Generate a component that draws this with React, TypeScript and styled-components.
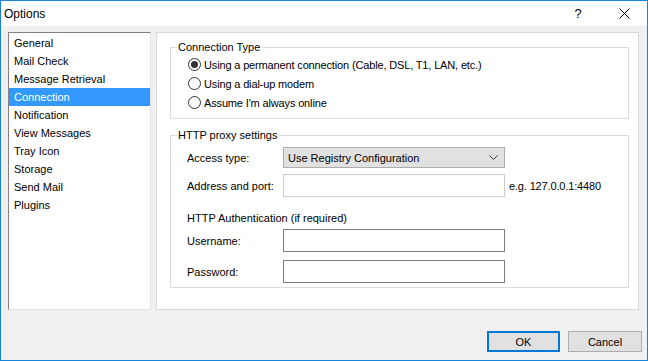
import React, { useState } from 'react';
import styled, { createGlobalStyle } from 'styled-components';

const GlobalStyle = createGlobalStyle`
  html, body {
    margin: 0;
    padding: 0;
    background: #ffffff;
  }
  * {
    box-sizing: border-box;
  }
`;

const Window = styled.div`
  width: 648px;
  height: 361px;
  border: 1px solid #1883d7;
  background: #f0f0f0;
  display: flex;
  flex-direction: column;
  font-family: "Liberation Sans", Arial, sans-serif;
  font-size: 11px;
  color: #000;
`;

const TitleBar = styled.div`
  height: 25px;
  background: #ffffff;
  display: flex;
  align-items: center;
  padding-left: 3px;
`;

const Title = styled.div`
  flex: 1;
  font-size: 12px;
`;

const CaptionButton = styled.div`
  width: 46px;
  height: 25px;
  display: flex;
  align-items: center;
  justify-content: center;
  font-size: 13px;
`;

const Body = styled.div`
  flex: 1;
  display: flex;
  flex-direction: column;
  padding: 6px 8px 0 7px;
`;

const MainRow = styled.div`
  display: flex;
  gap: 5px;
  height: 278px;
`;

const ListBox = styled.div`
  width: 143px;
  background: #ffffff;
  border-style: solid;
  border-width: 1px;
  border-color: #828282 #e3e3e3 #e3e3e3 #828282;
  padding-top: 1px;
  display: flex;
  flex-direction: column;
`;

const ListItem = styled.div<{ $selected?: boolean }>`
  height: 18px;
  line-height: 18px;
  padding-left: 5px;
  background: ${p => (p.$selected ? '#3399ff' : 'transparent')};
  color: ${p => (p.$selected ? '#ffffff' : '#000000')};
  cursor: default;
`;

const Panel = styled.div`
  flex: 1;
  background: #ffffff;
  border: 1px solid #d9d9d9;
  padding: 7px 9px 0 13px;
  display: flex;
  flex-direction: column;
  gap: 1px;
`;

const Group = styled.fieldset<{ $pb: number; $mt?: number }>`
  margin: ${p => p.$mt ?? 0}px 0 0 0;
  border: 1px solid #dcdcdc;
  padding: 0 0 ${p => p.$pb}px 0;
  min-width: 0;
`;

const Legend = styled.legend`
  padding: 0 2px 0 1px;
  margin-left: 6px;
  line-height: 14px;
  font-size: 11px;
`;

const RadioList = styled.div`
  display: flex;
  flex-direction: column;
  padding: 1px 0 0 17px;
`;

const RadioRow = styled.label`
  height: 19px;
  display: flex;
  align-items: center;
  gap: 3px;
  letter-spacing: -0.15px;
  cursor: default;
`;

const RadioCircle = styled.span<{ $checked?: boolean }>`
  width: 13px;
  height: 13px;
  border-radius: 50%;
  border: 1px solid #333333;
  background: #ffffff;
  display: flex;
  align-items: center;
  justify-content: center;
  &::after {
    content: '';
    width: 7px;
    height: 7px;
    border-radius: 50%;
    background: ${p => (p.$checked ? '#333333' : 'transparent')};
  }
`;

const ProxyGrid = styled.div`
  display: grid;
  grid-template-columns: 96px 222px auto;
  align-items: center;
  padding-left: 16px;
`;

const FieldLabel = styled.div<{ $top: number }>`
  margin-top: ${p => p.$top}px;
`;

const Heading = styled.div<{ $top: number }>`
  grid-column: 1 / 4;
  margin-top: ${p => p.$top}px;
  height: 16px;
  line-height: 16px;
`;

const SelectBox = styled.div<{ $top: number }>`
  margin-top: ${p => p.$top}px;
  height: 21px;
  background: #e1e1e1;
  border: 1px solid #adadad;
  display: flex;
  align-items: center;
  justify-content: space-between;
  padding: 0 6px 0 4px;
`;

const TextBox = styled.div<{ $top: number; $disabled?: boolean }>`
  margin-top: ${p => p.$top}px;
  height: 23px;
  background: #ffffff;
  border: 1px solid ${p => (p.$disabled ? '#cccccc' : '#7a7a7a')};
`;

const Hint = styled.div<{ $top: number }>`
  margin-top: ${p => p.$top}px;
  padding-left: 4px;
  white-space: nowrap;
  letter-spacing: -0.15px;
`;

const ButtonRow = styled.div`
  display: flex;
  justify-content: flex-end;
  gap: 8px;
  margin-top: 21px;
  margin-right: -3px;
`;

const DialogButton = styled.button<{ $default?: boolean; $w: number }>`
  width: ${p => p.$w}px;
  height: 21px;
  font-family: "Liberation Sans", Arial, sans-serif;
  font-size: 11px;
  color: #000;
  background: #e1e1e1;
  border: ${p => (p.$default ? '2px solid #0078d7' : '1px solid #adadad')};
  padding: 0;
`;

const pages = [
  'General',
  'Mail Check',
  'Message Retrieval',
  'Connection',
  'Notification',
  'View Messages',
  'Tray Icon',
  'Storage',
  'Send Mail',
  'Plugins',
];

const connectionTypes = [
  'Using a permanent connection (Cable, DSL, T1, LAN, etc.)',
  'Using a dial-up modem',
  "Assume I'm always online",
];

export default function App() {
  const [page, setPage] = useState('Connection');
  const [connType, setConnType] = useState(0);

  return (
    <>
      <GlobalStyle />
      <Window>
        <TitleBar>
          <Title>Options</Title>
          <CaptionButton>?</CaptionButton>
          <CaptionButton>
            <svg width="11" height="11" viewBox="0 0 11 11">
              <path d="M0.5 0.5 L10.5 10.5 M10.5 0.5 L0.5 10.5" stroke="#000" strokeWidth="1" />
            </svg>
          </CaptionButton>
        </TitleBar>
        <Body>
          <MainRow>
            <ListBox>
              {pages.map(p => (
                <ListItem key={p} $selected={p === page} onClick={() => setPage(p)}>
                  {p}
                </ListItem>
              ))}
            </ListBox>
            <Panel>
              <Group $pb={6}>
                <Legend>Connection Type</Legend>
                <RadioList>
                  {connectionTypes.map((t, i) => (
                    <RadioRow key={t} onClick={() => setConnType(i)}>
                      <RadioCircle $checked={connType === i} />
                      {t}
                    </RadioRow>
                  ))}
                </RadioList>
              </Group>
              <Group $pb={4} $mt={8}>
                <Legend>HTTP proxy settings</Legend>
                <ProxyGrid>
                  <FieldLabel $top={5}>Access type:</FieldLabel>
                  <SelectBox $top={5}>
                    <span>Use Registry Configuration</span>
                    <svg width="9" height="5" viewBox="0 0 9 5">
                      <path d="M0.5 0.5 L4.5 4.5 L8.5 0.5" fill="none" stroke="#333" strokeWidth="1" />
                    </svg>
                  </SelectBox>
                  <div />
                  <FieldLabel $top={6}>Address and port:</FieldLabel>
                  <TextBox $top={6} $disabled />
                  <Hint $top={6}>e.g. 127.0.0.1:4480</Hint>
                  <Heading $top={13}>HTTP Authentication (if required)</Heading>
                  <FieldLabel $top={3}>Username:</FieldLabel>
                  <TextBox $top={3} />
                  <div />
                  <FieldLabel $top={8}>Password:</FieldLabel>
                  <TextBox $top={8} />
                  <div />
                </ProxyGrid>
              </Group>
            </Panel>
          </MainRow>
          <ButtonRow>
            <DialogButton $default $w={73}>OK</DialogButton>
            <DialogButton $w={74}>Cancel</DialogButton>
          </ButtonRow>
        </Body>
      </Window>
    </>
  );
}
